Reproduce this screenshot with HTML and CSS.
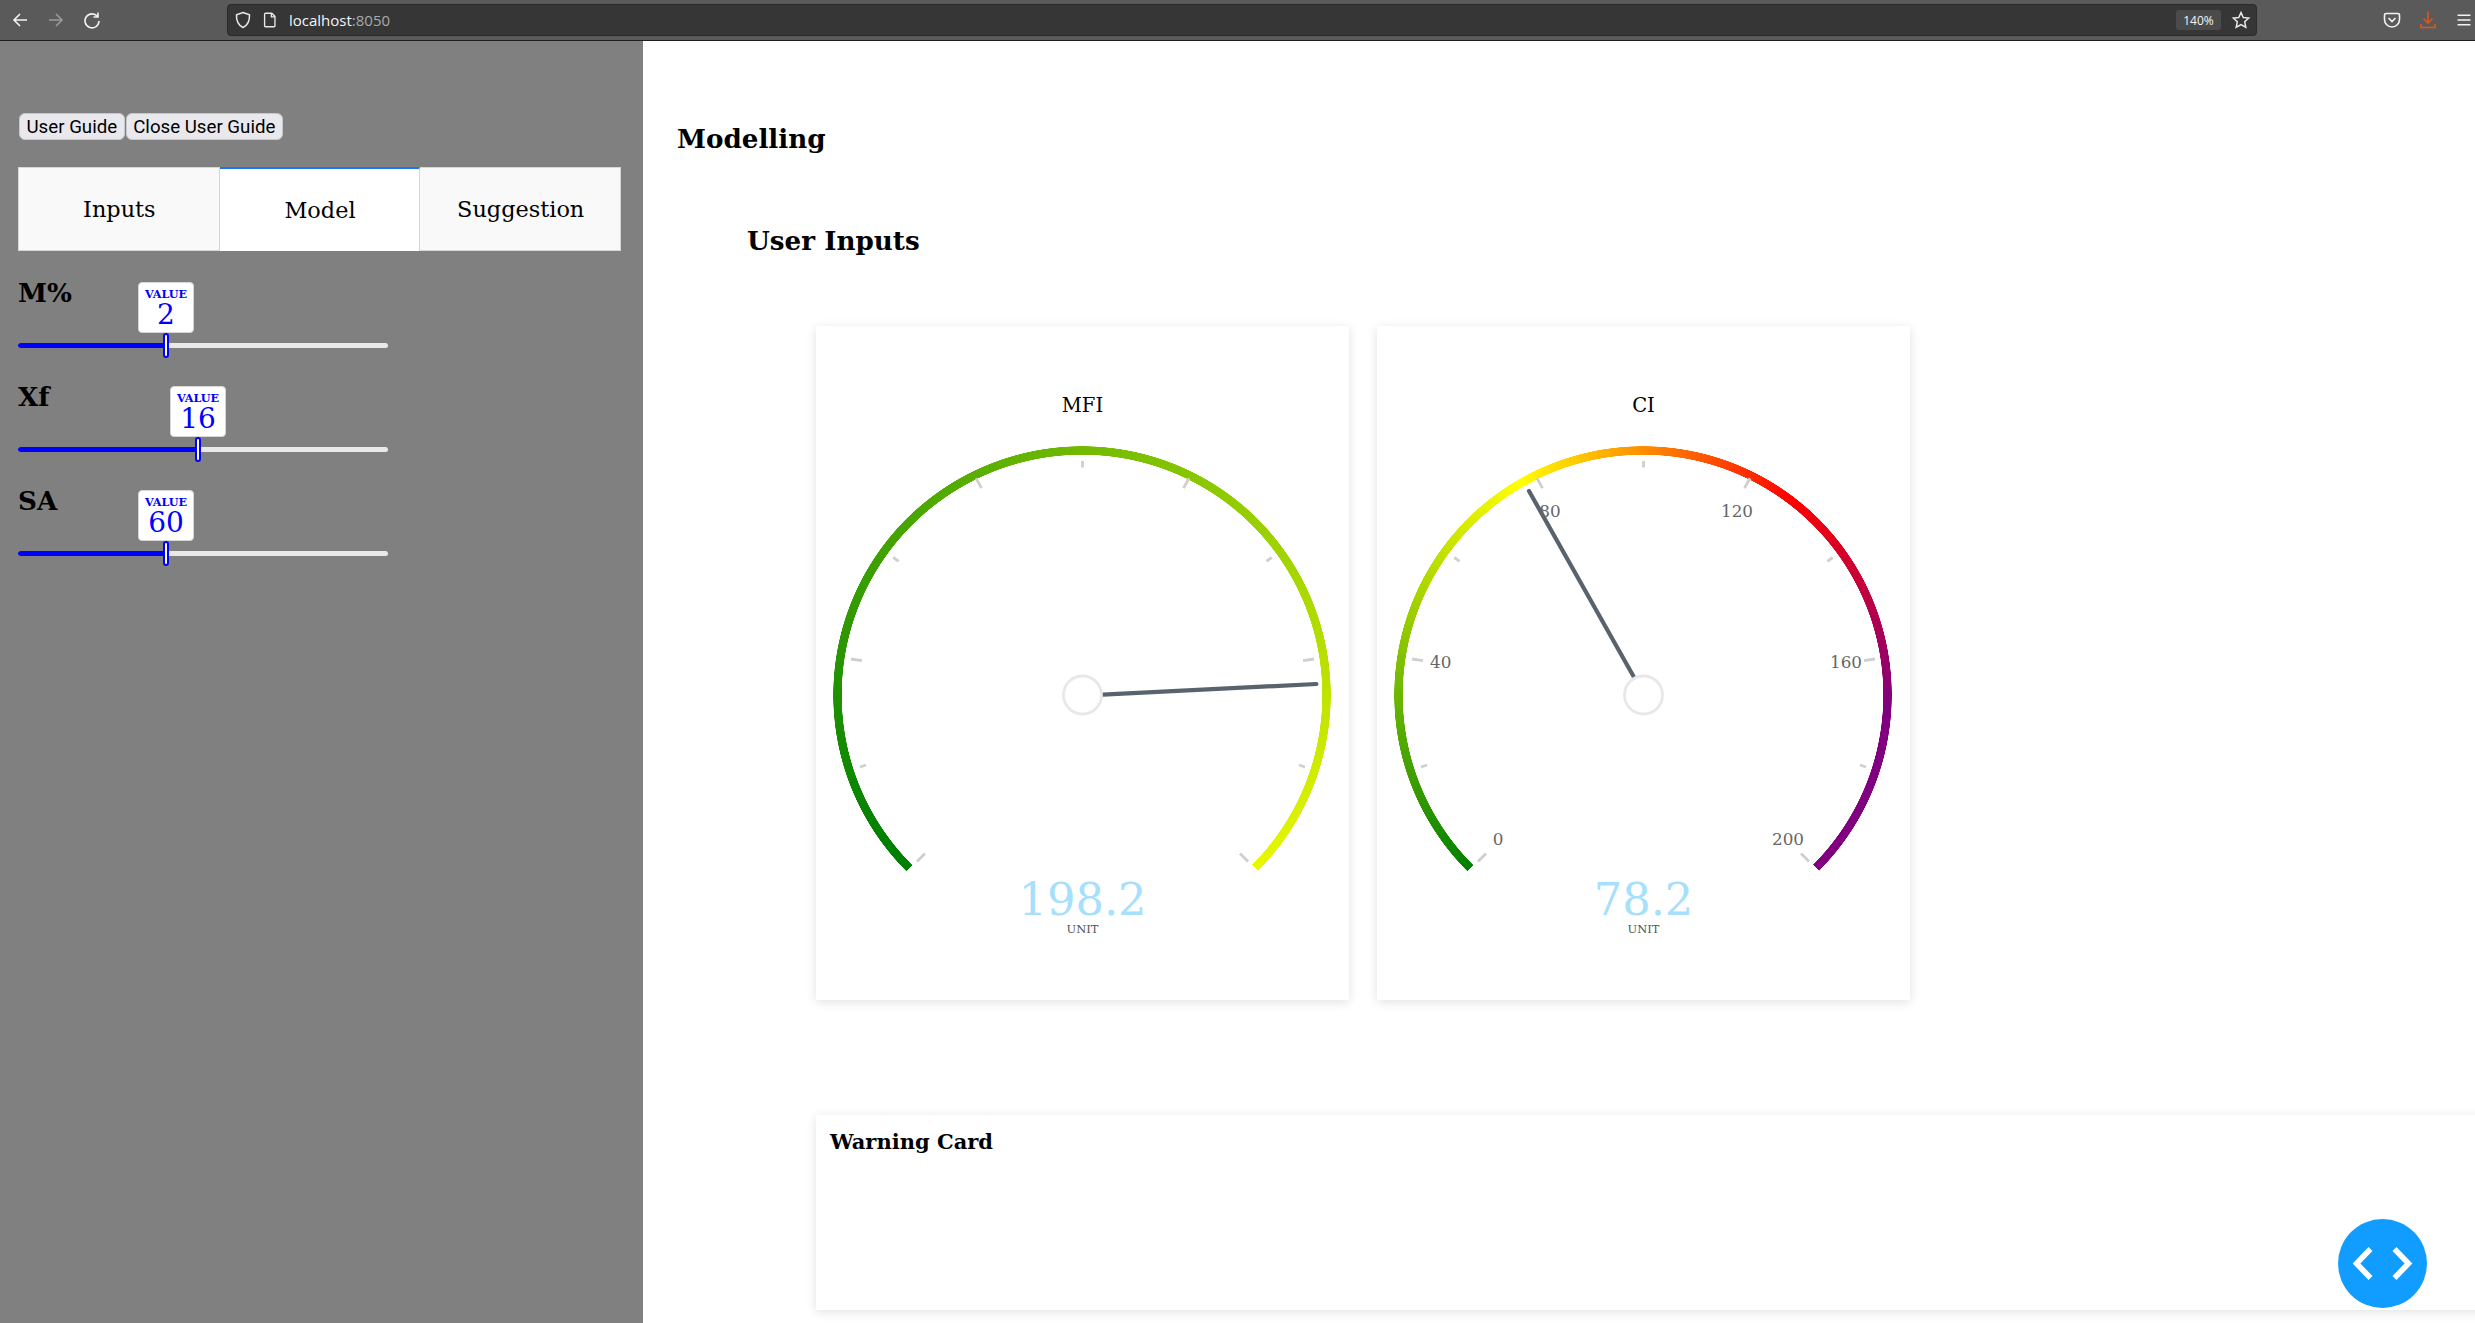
FILE: index.html
```html
<!DOCTYPE html>
<html lang="en">
<head>
<meta charset="utf-8">
<title>Modelling</title>
<link rel="stylesheet" href="styles.css">
</head>
<body>
<header class="toolbar">
  <div class="nav-icons">
    <svg class="tb-icon" viewBox="0 0 20 20"><path d="M17 10H4M10 4l-6 6 6 6"/></svg>
    <svg class="tb-icon dim" viewBox="0 0 20 20"><path d="M3 10h13M10 4l6 6-6 6"/></svg>
    <svg class="tb-icon" viewBox="0 0 20 20"><path d="M15.500 6.500A7 7 0 1 0 17 11M16 2.500v4.500h-4.500"/></svg>
  </div>
  <div class="urlbar">
    <svg class="url-icon" viewBox="0 0 20 20"><path d="M10 2.500l6.500 2.200c.3 6.500-1.800 10.500-6.500 12.800C5.300 15.200 3.200 11.200 3.500 4.700z"/></svg>
    <svg class="url-icon page" viewBox="0 0 20 20"><path d="M5 2.500h7l3.500 3.500v10.500a1 1 0 0 1-1 1H5a1 1 0 0 1-1-1v-13a1 1 0 0 1 1-1zM11.500 2.500v4h4"/></svg>
    <span class="url-text">localhost<span class="url-port">:8050</span></span>
    <span class="zoom-pill">140%</span>
    <svg class="url-icon star" viewBox="0 0 20 20"><path d="M10 2.500l2.300 5 5.400.6-4 3.700 1.100 5.400L10 14.500l-4.800 2.700 1.100-5.400-4-3.700 5.400-.6z"/></svg>
  </div>
  <div class="tool-icons">
    <svg class="tb-icon" viewBox="0 0 20 20"><path d="M4 3.500h12a1.500 1.500 0 0 1 1.500 1.500v4.500a7.500 7.500 0 0 1-15 0V5A1.500 1.500 0 0 1 4 3.500zM6.500 8l3.500 3.500L13.500 8"/></svg>
    <svg class="tb-icon orange" viewBox="0 0 20 20"><path d="M10 1.500v11M5.500 8.500l4.500 4.500 4.500-4.500M3 14v3.500h14V14"/></svg>
    <svg class="tb-icon" viewBox="0 0 20 20"><path d="M3.500 5.200h13M3.500 10h13M3.500 14.800h13"/></svg>
  </div>
</header>

<div class="app">
  <aside class="sidebar">
    <div class="guide-buttons">
      <button class="guide-btn" type="button">User Guide</button>
      <button class="guide-btn" type="button">Close User Guide</button>
    </div>
    <nav class="tabs">
      <div class="tab">Inputs</div>
      <div class="tab active">Model</div>
      <div class="tab">Suggestion</div>
    </nav>
    <div class="sliders">
      <div class="slider-row">
        <h3 class="slider-label">M%</h3>
        <div class="track">
          <div class="fill" style="width:40%">
            <div class="thumb"></div>
            <div class="tip"><span class="tip-cap">VALUE</span><span class="tip-val">2</span></div>
          </div>
        </div>
      </div>
      <div class="slider-row">
        <h3 class="slider-label">Xf</h3>
        <div class="track">
          <div class="fill" style="width:48.65%">
            <div class="thumb"></div>
            <div class="tip"><span class="tip-cap">VALUE</span><span class="tip-val">16</span></div>
          </div>
        </div>
      </div>
      <div class="slider-row">
        <h3 class="slider-label">SA</h3>
        <div class="track">
          <div class="fill" style="width:40%">
            <div class="thumb"></div>
            <div class="tip"><span class="tip-cap">VALUE</span><span class="tip-val">60</span></div>
          </div>
        </div>
      </div>
    </div>
  </aside>

  <main class="content">
    <h3 class="page-title">Modelling</h3>
    <h3 class="section-title">User Inputs</h3>
    <section class="gauges">
      <article class="card gauge-card">
        <div class="ring ring-mfi"></div>
        <svg class="gauge-svg" viewBox="0 0 533 674">
          <path class="ticks" d="M101 535.500l8-8M44 441l6-2M35 333l11 1.700M77.300 231.500l5.300 3.900M160 152.300l5.500 9.800M266.500 135v6.500M373 152.300l-5.500 9.800M455.700 231.500l-5.300 3.900M498 333l-11 1.700M489 441l-6-2M432 535.500l-8-8"/>
          <line class="needle" x1="286.900" y1="368.600" x2="500.400" y2="358"/>
          <circle class="hub" cx="266.500" cy="369" r="19"/>
          <text class="g-title" x="266.500" y="86.400">MFI</text>
          <text class="g-value" x="266.500" y="589">198.2</text>
          <text class="g-unit" x="266.500" y="606.500">UNIT</text>
        </svg>
      </article>
      <article class="card gauge-card">
        <div class="ring ring-ci"></div>
        <svg class="gauge-svg" viewBox="0 0 533 674">
          <path class="ticks" d="M101 535.500l8-8M44 441l6-2M35 333l11 1.700M77.300 231.500l5.300 3.900M160 152.300l5.500 9.800M266.500 135v6.500M373 152.300l-5.500 9.800M455.700 231.500l-5.300 3.900M498 333l-11 1.700M489 441l-6-2M432 535.500l-8-8"/>
          <line class="needle" x1="256.600" y1="350.500" x2="152" y2="165"/>
          <circle class="hub" cx="266.500" cy="369" r="19"/>
          <g class="g-labels">
            <text x="121" y="519">0</text>
            <text x="63.700" y="342">40</text>
            <text x="173" y="190.500">80</text>
            <text x="360" y="190.500">120</text>
            <text x="469" y="342">160</text>
            <text x="411" y="519">200</text>
          </g>
          <text class="g-title" x="266.500" y="86.400">CI</text>
          <text class="g-value" x="266.500" y="589">78.2</text>
          <text class="g-unit" x="266.500" y="606.500">UNIT</text>
        </svg>
      </article>
    </section>
    <section class="card warning-card">
      <h4 class="warning-title">Warning Card</h4>
    </section>
  </main>
</div>

<button class="fab" type="button" aria-label="Toggle code">
  <svg viewBox="0 0 89 89"><path d="M32.500 30L18.500 44.500 32.500 59M56.500 30l14 14.500L56.500 59"/></svg>
</button>
</body>
</html>
```
FILE: styles.css
```css
* { box-sizing: border-box; }
html, body { margin: 0; height: 100%; }
body {
  width: 2475px;
  height: 1323px;
  overflow: hidden;
  background: #fff;
  font-family: "DejaVu Serif", serif;
  color: #000;
}

/* Browser chrome */
.toolbar {
  display: flex;
  align-items: center;
  height: 41px;
  background: #5a5a5a;
  border-bottom: 1px solid #1f1f1f;
}
.nav-icons { display: flex; gap: 16px; width: 227px; padding-left: 10px; }
.tb-icon {
  width: 20px;
  height: 20px;
  fill: none;
  stroke: #f2f2f2;
  stroke-width: 1.6;
}
.tb-icon.dim { stroke: #9a9a9a; }
.tb-icon.orange { stroke: #e2531f; }
.urlbar {
  display: flex;
  align-items: center;
  width: 2030px;
  height: 32px;
  background: #363636;
  border: 1px solid #2a2a2a;
  border-radius: 4px;
  color: #f5f5f5;
}
.url-icon {
  width: 20px;
  height: 20px;
  margin-left: 5px;
  fill: none;
  stroke: #e8e8e8;
  stroke-width: 1.5;
}
.url-icon.page { margin-left: 8px; width: 18px; height: 18px; }
.url-text {
  margin-left: 10px;
  font: 15px "Open Sans", sans-serif;
  flex: 1;
}
.url-port { color: #a8a8a8; }
.zoom-pill {
  display: flex;
  align-items: center;
  justify-content: center;
  width: 45px;
  height: 20px;
  background: #4b4b4b;
  border-radius: 3px;
  font: 12px "Open Sans", sans-serif;
}
.url-icon.star { margin: 0 5px 0 10px; }
.tool-icons {
  display: flex;
  gap: 16px;
  margin-left: auto;
  padding-right: 1px;
}

/* Page frame */
.app { display: flex; height: 1282px; }

.sidebar {
  flex: none;
  width: 643px;
  padding: 72px 22px 0 18px;
  background: #808080;
}
.guide-buttons { display: flex; gap: 1px; padding-left: 1px; }
.guide-btn {
  height: 27px;
  padding: 0 6.500px;
  background: #e9e9ed;
  border: 1px solid #c8c8cc;
  border-radius: 6px;
  color: #000;
  font: 18.700px "Roboto", sans-serif;
  line-height: 26px;
}
.tabs {
  display: flex;
  height: 84px;
  margin-top: 27px;
}
.tab {
  flex: 1;
  display: flex;
  align-items: center;
  justify-content: center;
  padding-left: 1px;
  background: #f9f9f9;
  border: 1px solid #d6d6d6;
  border-left-width: 0;
  font-size: 22.400px;
}
.tab:first-child { border-left-width: 1px; }
.tab.active {
  background: #fff;
  border-top: 2px solid #1975fa;
  border-bottom: none;
}

.sliders { padding-top: 22px; }
.slider-row { height: 104px; width: 370px; }
.slider-label {
  margin: 0;
  height: 40px;
  font-size: 26.200px;
  line-height: 40px;
  font-weight: 700;
}
.track {
  height: 5.600px;
  margin-top: 29.500px;
  background: #e9e9e9;
  border-radius: 3px;
}
.fill {
  position: relative;
  height: 100%;
  background: #0000ff;
  border-radius: 3px 0 0 3px;
}
.thumb {
  position: absolute;
  right: -3.250px;
  top: -10px;
  width: 6.500px;
  height: 25px;
  background: #fff;
  border: 2px solid #0000ff;
  border-radius: 4px;
}
.tip {
  position: absolute;
  right: -28px;
  bottom: 15.600px;
  display: flex;
  flex-direction: column;
  align-items: center;
  width: 56px;
  height: 51px;
  padding-top: 5px;
  background: #fff;
  border: 1px solid #d6d6d6;
  border-radius: 4px;
  color: #0000ff;
}
.tip-cap { font-size: 11.200px; font-weight: 700; line-height: 12px; }
.tip-val { font-size: 28px; line-height: 28px; margin-top: 1px; }

.content { flex: 1; min-width: 0; padding-left: 34px; }
.page-title {
  margin: 78px 0 0;
  font-size: 26.200px;
  line-height: 40px;
}
.section-title {
  margin: 61.500px 0 0 70px;
  font-size: 26.200px;
  line-height: 40px;
}
.card {
  background: #fff;
  box-shadow: 0 2px 10px rgba(0, 0, 0, 0.12);
}
.gauges {
  display: flex;
  gap: 28px;
  margin: 65.500px 0 0 139px;
}
.gauge-card {
  position: relative;
  width: 533px;
  height: 674px;
}
.ring {
  position: absolute;
  left: 16.250px;
  top: 119px;
  width: 500px;
  height: 500px;
  border-radius: 50%;
  -webkit-mask: radial-gradient(circle closest-side, transparent 240px, #000 240.500px, #000 248.500px, transparent 249px);
  mask: radial-gradient(circle closest-side, transparent 240px, #000 240.500px, #000 248.500px, transparent 249px);
}
.ring-mfi {
  background: conic-gradient(from 225deg, #008000 0deg, #008000 8deg, #e8f800 270deg, transparent 270deg);
}
.ring-ci {
  background: conic-gradient(from 225deg, #008000 0deg, #ffff00 105deg, #ff0000 172deg, #800080 228deg, #800080 270deg, transparent 270deg);
}
.gauge-svg {
  position: absolute;
  inset: 0;
  width: 100%;
  height: 100%;
}
.ticks { fill: none; stroke: #cfcfcf; stroke-width: 2.800; }
.needle { stroke: #59636e; stroke-width: 4.200; stroke-linecap: round; }
.hub { fill: #fff; stroke: #e8e8e8; stroke-width: 2.800; }
.g-title { font-size: 19.600px; text-anchor: middle; fill: #000; }
.g-value { font-size: 44.800px; text-anchor: middle; fill: #a6e0fd; }
.g-unit { font-size: 11.500px; text-anchor: middle; fill: #555; }
.g-labels text { font-size: 16.800px; text-anchor: middle; fill: #666; }

.warning-card {
  width: 1700px;
  height: 195px;
  margin: 114.500px 0 0 139px;
  padding: 13px 14px;
}
.warning-title {
  margin: 0;
  font-size: 21px;
  line-height: 28px;
}

.fab {
  position: fixed;
  left: 2338px;
  top: 1219px;
  width: 89px;
  height: 89px;
  padding: 0;
  background: #119dff;
  border: none;
  border-radius: 50%;
}
.fab svg {
  display: block;
  width: 89px;
  height: 89px;
  fill: none;
  stroke: #fff;
  stroke-width: 5.500;
}
```
